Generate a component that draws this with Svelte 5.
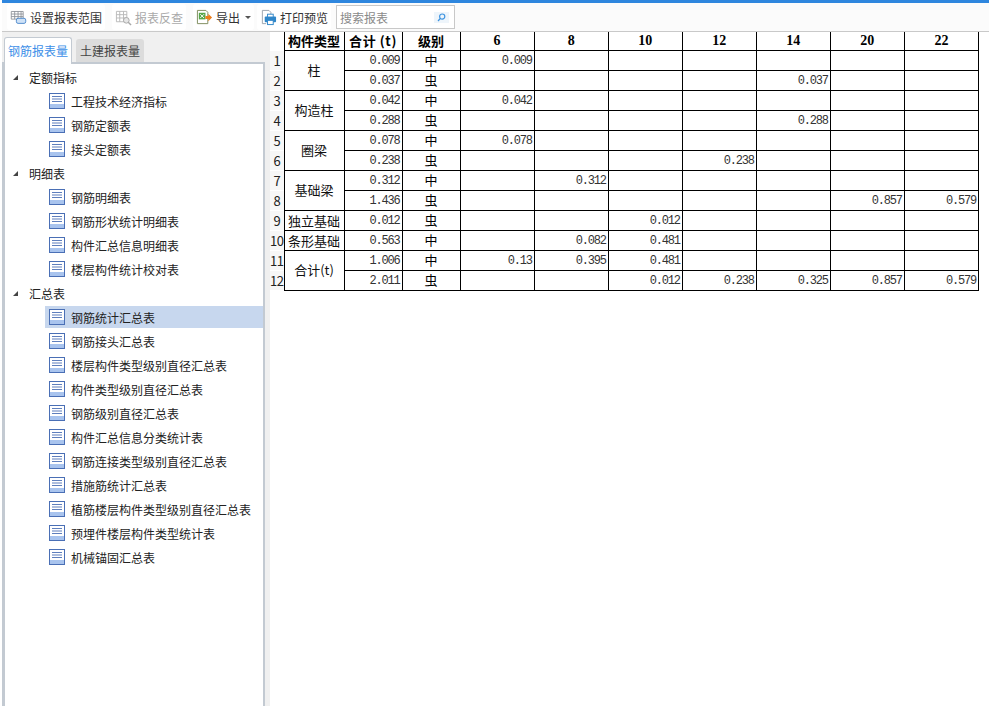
<script lang="ts">
  const sections = [
    { title: "定额指标", items: ["工程技术经济指标", "钢筋定额表", "接头定额表"] },
    { title: "明细表", items: ["钢筋明细表", "钢筋形状统计明细表", "构件汇总信息明细表", "楼层构件统计校对表"] },
    {
      title: "汇总表",
      items: [
        "钢筋统计汇总表", "钢筋接头汇总表", "楼层构件类型级别直径汇总表", "构件类型级别直径汇总表",
        "钢筋级别直径汇总表", "构件汇总信息分类统计表", "钢筋连接类型级别直径汇总表", "措施筋统计汇总表",
        "植筋楼层构件类型级别直径汇总表", "预埋件楼层构件类型统计表", "机械锚固汇总表",
      ],
    },
  ];
  const selected = "钢筋统计汇总表";

  const diameters = ["6", "8", "10", "12", "14", "20", "22"];

  const rows = [
    { name: "柱", span: 2, total: "0.009", grade: "中", cells: { 6: "0.009" } },
    { total: "0.037", grade: "虫", cells: { 14: "0.037" } },
    { name: "构造柱", span: 2, total: "0.042", grade: "中", cells: { 6: "0.042" } },
    { total: "0.288", grade: "虫", cells: { 14: "0.288" } },
    { name: "圈梁", span: 2, total: "0.078", grade: "中", cells: { 6: "0.078" } },
    { total: "0.238", grade: "虫", cells: { 12: "0.238" } },
    { name: "基础梁", span: 2, total: "0.312", grade: "中", cells: { 8: "0.312" } },
    { total: "1.436", grade: "虫", cells: { 20: "0.857", 22: "0.579" } },
    { name: "独立基础", span: 1, total: "0.012", grade: "虫", cells: { 10: "0.012" } },
    { name: "条形基础", span: 1, total: "0.563", grade: "中", cells: { 8: "0.082", 10: "0.481" } },
    { name: "合计(t)", span: 2, total: "1.006", grade: "中", cells: { 6: "0.13", 8: "0.395", 10: "0.481" } },
    { total: "2.011", grade: "虫", cells: { 10: "0.012", 12: "0.238", 14: "0.325", 20: "0.857", 22: "0.579" } },
  ];
</script>

<div class="window">
  <div class="toolbar">
    <button class="tool">
      <svg width="17" height="16" viewBox="0 0 20 18">
        <path d="M1.500 2.500h14v9h-14zM1.500 5.500h14M1.500 8.500h14M5.500 2.500v9M9.500 2.500v9M13 2.500v9" fill="none" stroke="#8a8f96" />
        <rect x="7.500" y="10.500" width="11" height="6" rx="2" fill="#cfe2f7" stroke="#3f7fc8" />
      </svg>
      <span>设置报表范围</span>
    </button>
    <button class="tool disabled">
      <svg width="17" height="17" viewBox="0 0 18 18">
        <path d="M1.500 2.500h11v11h-11zM1.500 6h11M1.500 9.500h11M5 2.500v11M9 2.500v11" fill="none" stroke="#b9b9b9" />
        <circle cx="12" cy="12" r="3" fill="#e6e6e6" stroke="#a8a8a8" />
        <path d="M14 14l3 3" stroke="#a8a8a8" stroke-width="1.500" />
      </svg>
      <span>报表反查</span>
    </button>
    <button class="tool">
      <svg width="17" height="17" viewBox="0 0 18 18">
        <path d="M1.500 1.500h9l2 2v12h-11z" fill="#fff" stroke="#7c8a5a" />
        <rect x="3" y="4" width="7" height="7" fill="#57a54a" />
        <path d="M4.500 5.500l4 4M8.500 5.500l-4 4" stroke="#fff" />
        <path d="M10 7.500h3v-2.500l4 4-4 4v-2.500h-3z" fill="#ec7d1c" />
      </svg>
      <span>导出</span>
      <i class="caret"></i>
    </button>
    <button class="tool">
      <svg width="17" height="17" viewBox="0 0 18 18">
        <path d="M2.500 1.500h7l2 2v4M2.500 1.500v14h4" fill="none" stroke="#9aa3ad" />
        <rect x="5" y="8" width="12" height="6" rx="1" fill="#2f86c9" />
        <rect x="8" y="5.500" width="6" height="3" fill="#fff" stroke="#2f86c9" />
        <rect x="8" y="12" width="6" height="4.500" fill="#fff" stroke="#2f86c9" />
      </svg>
      <span>打印预览</span>
    </button>
    <div class="search">
      <span class="placeholder">搜索报表</span>
      <span class="search-btn">
        <svg width="9" height="9" viewBox="0 0 9 9">
          <circle cx="5.200" cy="3.600" r="2.600" fill="none" stroke="#3f94e0" stroke-width="1.200" />
          <path d="M3.300 5.500L1 8" stroke="#3f94e0" stroke-width="1.200" />
        </svg>
      </span>
    </div>
  </div>

  <div class="body">
    <aside class="side">
      <div class="tabs">
        <div class="tab active">钢筋报表量</div>
        <div class="tab">土建报表量</div>
      </div>
      <div class="tree">
        {#each sections as section}
          <div class="group"><i class="arrow"></i>{section.title}</div>
          {#each section.items as item}
            <div class="leaf" class:selected={item === selected}>
              <svg width="16" height="16" viewBox="0 0 16 16">
                <rect x="0.500" y="0.500" width="15" height="15" fill="#fff" stroke="#4a6fb5" />
                <rect x="1" y="11" width="14" height="4" fill="#a9c4ee" />
                <path d="M3 3.500h10M3 6h10M3 8.500h10" stroke="#5f7fbd" />
              </svg>
              <span>{item}</span>
            </div>
          {/each}
        {/each}
      </div>
    </aside>

    <main class="sheet">
      <table>
        <colgroup>
          <col class="c-index" />
          <col class="c-name" />
          <col class="c-total" />
          <col class="c-grade" />
          {#each diameters as _}
            <col class="c-dia" />
          {/each}
        </colgroup>
        <thead>
          <tr>
            <th class="index"></th>
            <th class="cjk">构件类型</th>
            <th class="cjk wide">合计 (t)</th>
            <th class="cjk">级别</th>
            {#each diameters as d}
              <th class="dia">{d}</th>
            {/each}
          </tr>
        </thead>
        <tbody>
          {#each rows as row, i}
            <tr>
              <td class="index">{i + 1}</td>
              {#if row.name}
                <td class="name" class:single={row.span === 1} rowspan={row.span}>{row.name}</td>
              {/if}
              <td class="num">{row.total}</td>
              <td class="grade">{row.grade}</td>
              {#each diameters as d}
                <td class="num">{row.cells[d] ?? ""}</td>
              {/each}
            </tr>
          {/each}
        </tbody>
      </table>
    </main>
  </div>
</div>

<style>
  :global(body) {
    background: #fff;
  }

  .window {
    width: 987px;
    height: 706px;
    margin-left: 2px;
    overflow: hidden;
    display: flex;
    flex-direction: column;
    background: #fff;
    font-family: "Noto Sans CJK SC", "Liberation Sans", sans-serif;
    font-size: 12px;
    color: #222;
    border-top: 3px solid #2e86de;
    box-sizing: border-box;
  }

  .toolbar {
    height: 29px;
    flex: none;
    display: flex;
    align-items: center;
    padding-left: 5px;
    border-bottom: 1px solid #c9c9c9;
    box-sizing: border-box;
    gap: 1px;
    background: #fbfbfb;
  }

  .tool {
    display: flex;
    align-items: center;
    gap: 3px;
    height: 26px;
    padding: 0 3px;
    border: none;
    border-radius: 3px;
    background: #fff;
    font: inherit;
    color: #333;
  }

  .tool.disabled {
    color: #aaa;
    margin-left: 6px;
  }

  .tool:nth-child(3) {
    margin-left: 6px;
  }

  .tool:nth-child(4) {
    margin-left: 2px;
  }

  .caret {
    width: 0;
    height: 0;
    margin-left: 2px;
    border: 3px solid transparent;
    border-top: 3px solid #555;
    border-bottom: none;
  }

  .search {
    width: 119px;
    height: 24px;
    margin-left: 4px;
    display: flex;
    align-items: center;
    justify-content: space-between;
    padding: 0 5px 0 3px;
    border: 1px solid #c8c8c8;
    box-sizing: border-box;
    background: #fff;
  }

  .placeholder {
    color: #8a8a8a;
  }

  .search-btn {
    width: 15px;
    height: 11px;
    display: flex;
    align-items: center;
    justify-content: center;
    background: #eef5fb;
  }

  .body {
    flex: 1;
    min-height: 0;
    display: flex;
  }

  .side {
    width: 268px;
    flex: none;
    padding-right: 5px;
    box-sizing: border-box;
    background: #f0f0f0;
    display: flex;
    flex-direction: column;
  }

  .tabs {
    height: 30px;
    flex: none;
    display: flex;
    align-items: flex-end;
    gap: 4px;
    padding-left: 2px;
  }

  .tab {
    width: 68px;
    height: 23px;
    display: flex;
    align-items: center;
    justify-content: center;
    background: #dcdcdc;
    color: #444;
    border-radius: 3px 3px 0 0;
    padding-bottom: 1px;
    box-sizing: border-box;
  }

  .tab.active {
    height: 27px;
    padding-bottom: 2px;
    background: #fff;
    color: #3d8fe8;
    border: 1px solid #c3cad2;
    border-bottom: none;
    margin-bottom: -2px;
    position: relative;
    z-index: 1;
  }

  .tree {
    flex: 1;
    background: #fff;
    border: 3px solid #c3cad2;
    border-width: 2px 2px 0 3px;
    padding-top: 1px;
  }

  .group {
    height: 24px;
    display: flex;
    align-items: center;
    padding-left: 8px;
  }

  .arrow {
    width: 0;
    height: 0;
    margin-right: 11px;
    border-bottom: 5px solid #444;
    border-left: 5px solid transparent;
  }

  .leaf {
    height: 24px;
    margin-left: 40px;
    padding-left: 4px;
    display: flex;
    align-items: center;
    gap: 6px;
  }

  .leaf.selected {
    height: 22px;
    margin-block: 1px;
    background: #c7d7ee;
  }

  .sheet {
    flex: 1;
    min-width: 0;
  }

  table {
    border-collapse: collapse;
    table-layout: fixed;
    width: 709px;
  }

  .c-index {
    width: 14px;
  }

  .c-name {
    width: 60px;
  }

  .c-total,
  .c-grade {
    width: 58px;
  }

  .c-dia {
    width: 74px;
  }

  th,
  td {
    padding: 1px 0 0;
    border: 1px solid #000;
    height: 18px;
    line-height: 18px;
    color: #000;
    overflow: hidden;
    white-space: nowrap;
  }

  thead th {
    padding: 0;
    height: 18px;
    border-top: none;
  }

  .index {
    border: none;
    border-right: 1px solid #000;
    background: #f7f7f7;
    box-shadow: inset 0 -1px 0 #fff;
    font-size: 13px;
    text-align: center;
    font-weight: 400;
    color: #222;
    letter-spacing: -0.5px;
  }

  th.index {
    background: #fff;
    box-shadow: none;
  }

  .cjk {
    font-size: 13px;
    font-weight: 700;
  }

  .wide {
    letter-spacing: 0.6px;
  }

  .dia {
    font-family: "Liberation Serif", serif;
    font-size: 14px;
    font-weight: 700;
  }

  .name {
    padding: 0 0 2px;
    font-size: 13px;
    text-align: center;
    color: #111;
  }

  .name.single {
    padding: 1px 0 0;
  }

  .num {
    text-align: right;
    padding-right: 2px;
    font-family: "Liberation Mono", monospace;
    font-size: 12px;
    letter-spacing: -1.2px;
    color: #333;
  }

  .grade {
    padding: 0 0 1px;
    text-align: center;
    font-size: 13px;
  }
</style>
